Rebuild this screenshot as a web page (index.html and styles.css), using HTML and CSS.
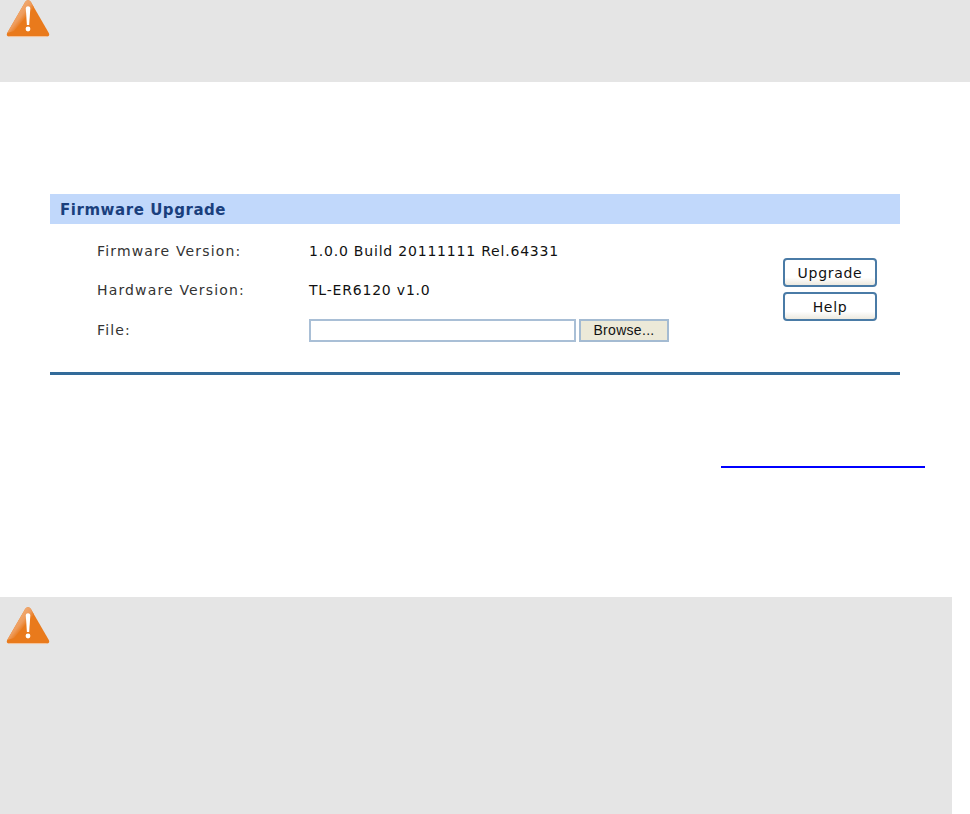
FILE: index.html
```html
<!DOCTYPE html>
<html lang="en">
<head>
<meta charset="utf-8">
<title>Firmware Upgrade</title>
<link rel="stylesheet" href="styles.css">
</head>
<body>
<svg class="defs" width="0" height="0" aria-hidden="true">
  <defs>
    <linearGradient id="shine" x1="0" y1="0" x2="1" y2="1">
      <stop offset="0" stop-color="#f4c8a4"/>
      <stop offset="0.5" stop-color="#ee9c5c"/>
      <stop offset="0.62" stop-color="#e97a1e"/>
    </linearGradient>
    <symbol id="warn" viewBox="0 0 46 40">
      <path d="M23 1.2c1.400 0 2.300.8 3 2L43.800 34c1.100 2 .2 3.600-2 3.600H4.200c-2.200 0-3.100-1.600-2-3.600L20 3.200c.7-1.200 1.600-2 3-2z" fill="#e97a1c"/>
      <path d="M23 1.200c1.400 0 2.300.8 3 2l3 5.300L9 32 2.200 34 20 3.200c.7-1.200 1.600-2 3-2z" fill="url(#shine)"/>
      <path d="M20.800 9.500c0-1.500 1-2.300 2.200-2.300s2.300.8 2.300 2.300l-1.100 16.500h-2.300z" fill="#fff"/>
      <circle cx="23" cy="30" r="2.400" fill="#fff"/>
      <path d="M4.200 37.600h37.600" stroke="#f6c49c" stroke-width="1" fill="none"/>
    </symbol>
  </defs>
</svg>
<div class="note note-top">
  <svg class="warn-icon warn-top" aria-hidden="true"><use href="#warn"/></svg>
</div>
<main class="panel">
  <h2 class="panel-title">Firmware Upgrade</h2>
  <div class="panel-body">
    <div class="rows">
      <div class="row"><span class="label">Firmware Version:</span><span class="value">1.0.0 Build 20111111 Rel.64331</span></div>
      <div class="row"><span class="label">Hardware Version:</span><span class="value">TL-ER6120 v1.0</span></div>
      <div class="row"><span class="label">File:</span><span class="file"><input class="file-input" type="text" aria-label="File"><button class="browse" type="button">Browse...</button></span></div>
    </div>
    <div class="actions">
      <button class="btn" type="button">Upgrade</button>
      <button class="btn" type="button">Help</button>
    </div>
  </div>
</main>
<div class="link-row"><a class="site-link" href="#" aria-label="link"></a></div>
<div class="note note-bottom">
  <svg class="warn-icon" aria-hidden="true"><use href="#warn"/></svg>
</div>
</body>
</html>
```

FILE: styles.css
```css
html, body {
  margin: 0;
  padding: 0;
  background: #fff;
}
body {
  width: 970px;
  height: 814px;
  overflow: hidden;
  font-family: "DejaVu Sans", Verdana, sans-serif;
  font-size: 14px;
  color: #222;
}
.defs {
  display: block;
  height: 0;
}
.note {
  background: #e5e5e5;
  box-sizing: border-box;
  padding-left: 5px;
}
.note-top {
  height: 82px;
  overflow: hidden;
}
.warn-icon {
  display: block;
  width: 46px;
  height: 40px;
}
.warn-top {
  margin-top: -1px;
}
.panel {
  margin: 112px 70px 0 50px;
  height: 181px;
  border-bottom: 3px solid #336b9a;
  box-sizing: border-box;
}
.panel-title {
  margin: 0;
  height: 30px;
  line-height: 32px;
  background: #c1d8fb;
  padding-left: 10px;
  font-size: 15px;
  font-weight: bold;
  letter-spacing: 0.55px;
  color: #1a3f7d;
}
.panel-body {
  display: flex;
  justify-content: space-between;
  padding-right: 23px;
}
.rows {
  padding: 7px 0 0 47px;
}
.row {
  display: flex;
  align-items: center;
  height: 39.5px;
}
.label {
  width: 212px;
  letter-spacing: 1.15px;
  color: #333;
}
.value {
  letter-spacing: 0.8px;
  color: #111;
}
.file {
  display: flex;
  gap: 3px;
  align-items: center;
  margin-top: 1px;
}
.file-input {
  width: 267px;
  height: 23px;
  box-sizing: border-box;
  border: 2px solid #a9bfd6;
  padding: 0;
  background: #fff;
}
.browse {
  width: 90px;
  height: 23px;
  box-sizing: border-box;
  border: 2px solid #a4bbd2;
  background: #ece9d8;
  padding: 0;
  font: 14px "Liberation Sans", Arial, sans-serif;
  letter-spacing: 0.3px;
  color: #111;
}
.actions {
  display: flex;
  flex-direction: column;
  gap: 5px;
  padding-top: 34px;
}
.btn {
  width: 94px;
  height: 29px;
  box-sizing: border-box;
  border: 2px solid #4a7ba6;
  border-radius: 4px;
  background: linear-gradient(#fff 70%, #ece9df);
  padding: 0;
  font: 14px "DejaVu Sans", Verdana, sans-serif;
  letter-spacing: 0.7px;
  color: #111;
}
.link-row {
  height: 94px;
  position: relative;
}
.site-link {
  position: absolute;
  left: 721px;
  top: 91px;
  width: 204px;
  height: 2px;
  background: #00f;
}
.note-bottom {
  width: 952px;
  height: 217px;
  margin-top: 128px;
  padding-top: 9px;
}
```
